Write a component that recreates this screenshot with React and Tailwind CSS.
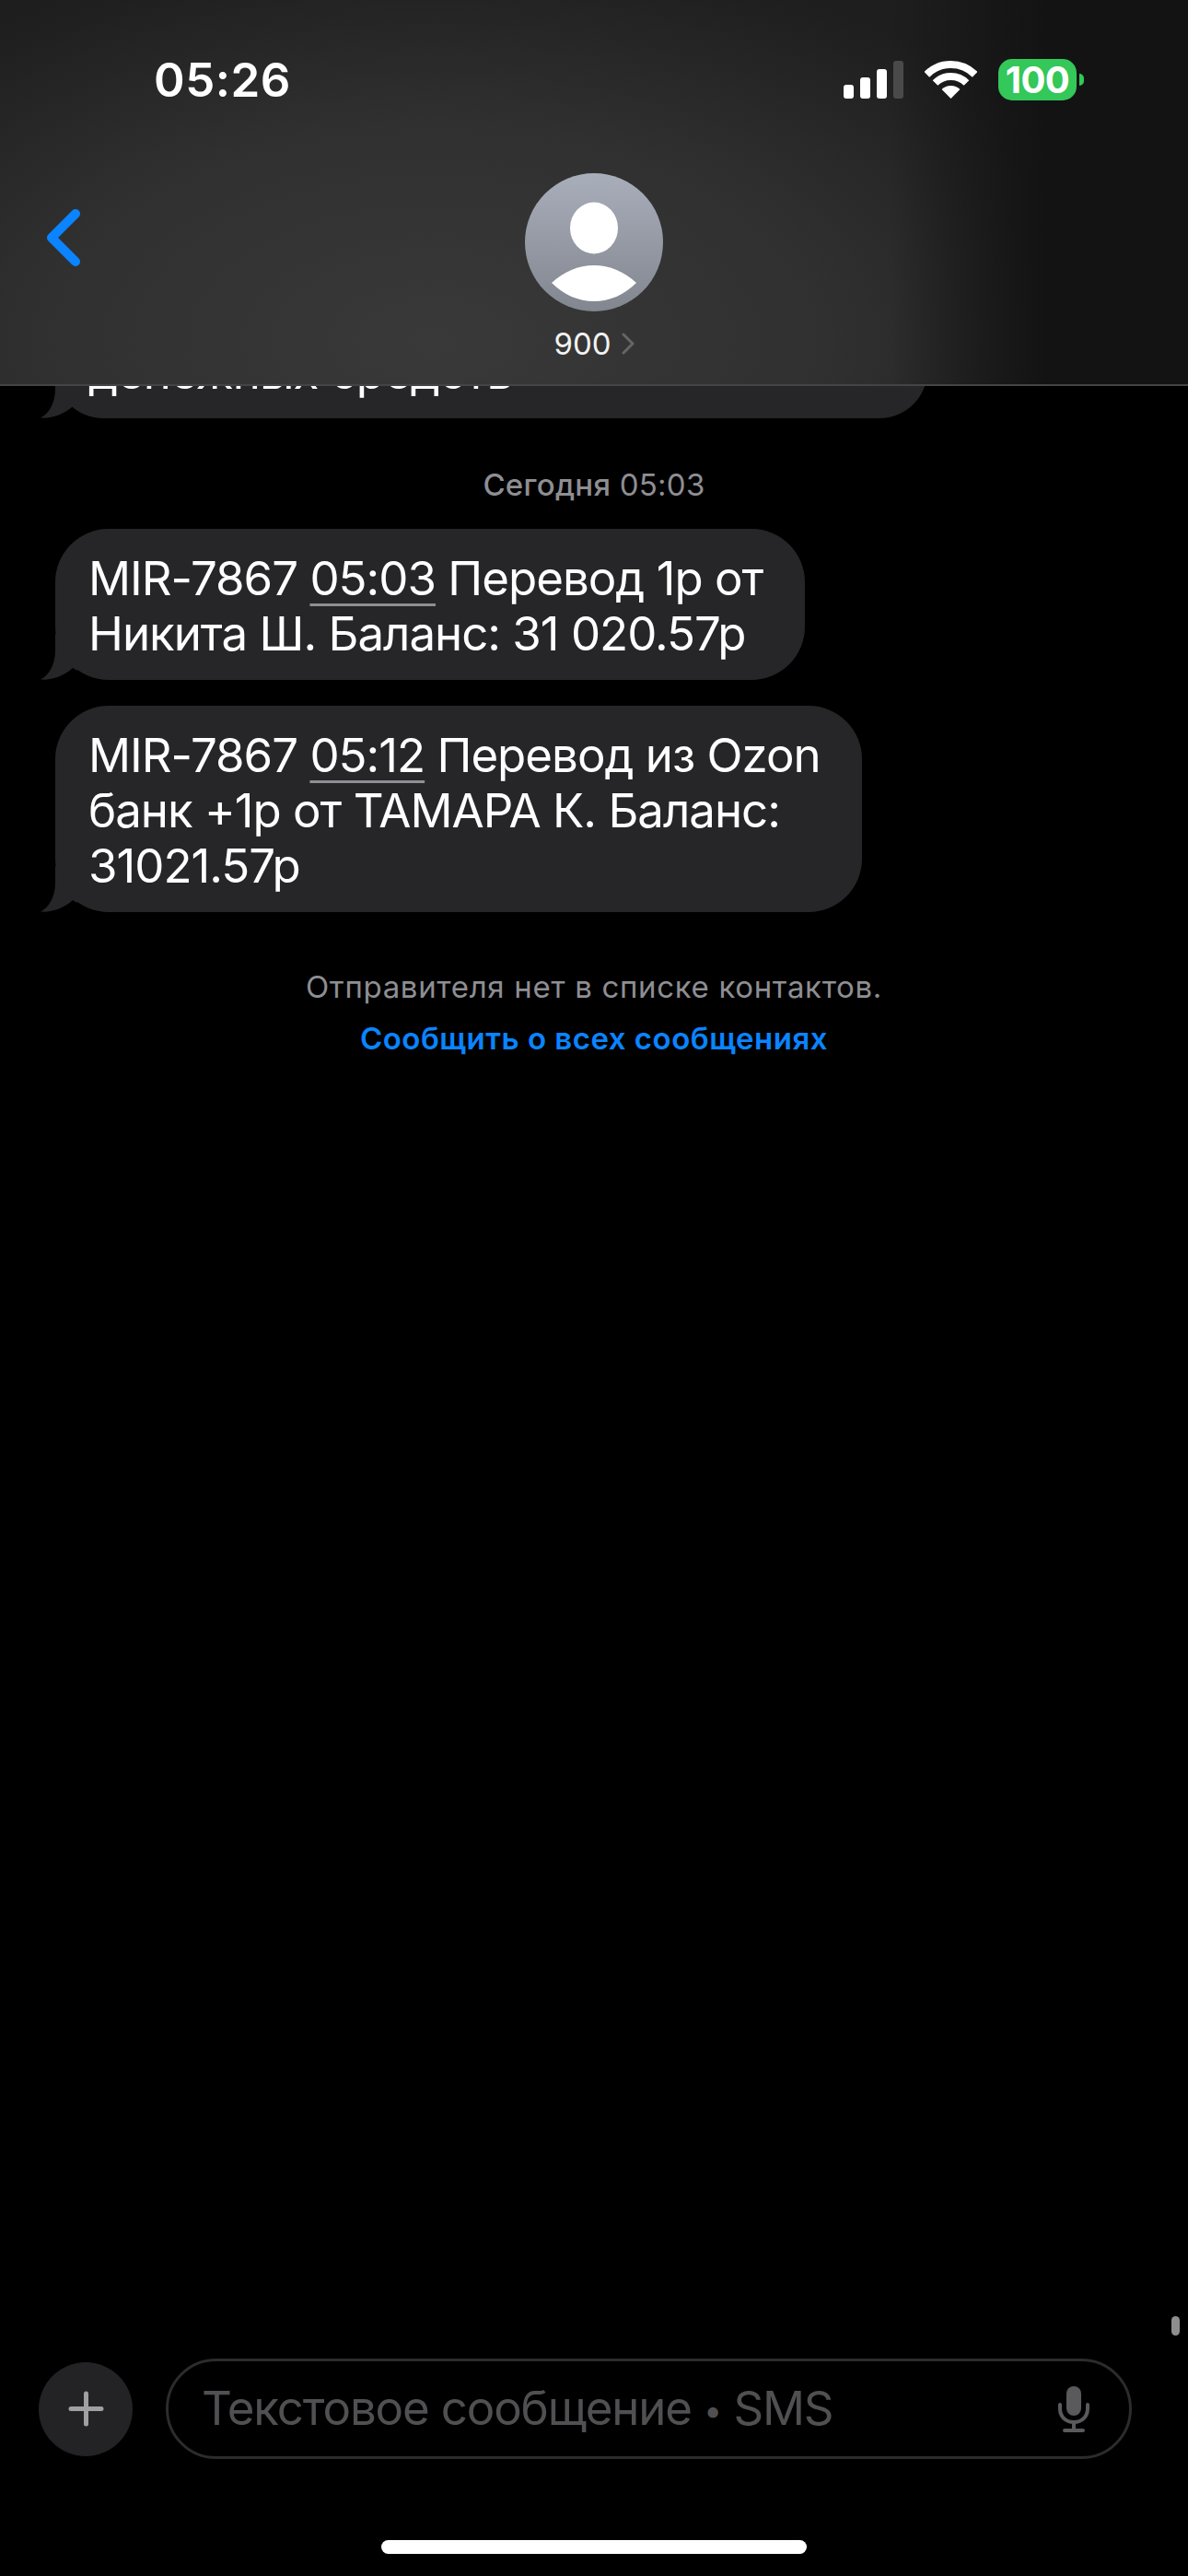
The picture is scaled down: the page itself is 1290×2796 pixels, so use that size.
const FONT = "font-['Inter','Noto_Sans',sans-serif]";

function Tail() {
  return (
    <svg className="absolute bottom-0 left-[-16px]" width="40" height="50" viewBox="0 0 40 50" fill="#262628">
      <path d="M16 0V18C16 34 9 45 0 49.5C12 50.5 25 46 35 37L40 40V0Z" />
    </svg>
  );
}

function Bubble({ className, children }) {
  return (
    <div className={`relative ml-[60px] rounded-[58px] bg-[#262628] pt-[24px] pb-[20px] pl-[36px] text-[51px] leading-[60px] font-[370] tracking-[-1px] whitespace-nowrap text-white ${className}`}>
      {children}
      <Tail />
    </div>
  );
}

function Time({ children }) {
  return <span className="underline decoration-[#8e8e93] decoration-[3px] underline-offset-[9px]">{children}</span>;
}

function StatusIcons() {
  return (
    <div className="flex items-center">
      <div className="flex h-[41px] items-end gap-[7px]">
        <div className="h-[15px] w-[11px] rounded-[3px] bg-white" />
        <div className="h-[23px] w-[11px] rounded-[3px] bg-white" />
        <div className="h-[32px] w-[11px] rounded-[3px] bg-white" />
        <div className="h-[41px] w-[11px] rounded-[3px] bg-[#4a4a4a]" />
      </div>
      <svg className="ml-[23px]" width="57" height="41" viewBox="0 0 57 41" fill="none" stroke="white" strokeWidth="8">
        <path d="M2.34 14.84A37 37 0 0 1 54.66 14.84" />
        <path d="M11.53 24.03A24 24 0 0 1 45.47 24.03" />
        <path d="M28.5 41L18.6 31.1A14 14 0 0 1 38.4 31.1Z" fill="white" stroke="none" />
      </svg>
      <div className="ml-[23px] flex h-[45px] w-[85px] items-center justify-center rounded-[15px] bg-[#34c759] text-[40px] leading-none font-bold tracking-[-0.5px] text-white">
        100
      </div>
      <div className="ml-[3px] h-[13px] w-[5px] rounded-r-full bg-[#34c759]" />
    </div>
  );
}

function Header() {
  return (
    <header className="h-[419px] shrink-0 border-b-2 border-[#444446] bg-[linear-gradient(90deg,transparent_75%,#131313_88%),radial-gradient(ellipse_780px_430px_at_470px_370px,#393939_0%,#303030_55%,#1e1e1e_100%)] pt-[64px]">
      <div className="flex h-[45px] items-center justify-between pr-[113px] pl-[167px]">
        <span className="text-[51px] leading-none font-semibold tracking-[0.5px] text-white">05:26</span>
        <StatusIcons />
      </div>
      <div className="mt-[79px] grid grid-cols-[1fr_auto_1fr]">
        <div className="pt-[38px] pl-[45px]">
          <svg width="48" height="75" viewBox="0 0 48 75" fill="none" stroke="#0a84ff" strokeWidth="10" strokeLinecap="round" strokeLinejoin="round">
            <path d="M37 6L11 32L37 58" />
          </svg>
        </div>
        <div className="flex flex-col items-center">
          <div className="h-[150px] w-[150px] overflow-hidden rounded-full bg-gradient-to-b from-[#a9aebb] to-[#81868f]">
            <svg width="150" height="150" viewBox="0 0 150 150" fill="white">
              <ellipse cx="75" cy="59.5" rx="26" ry="28" />
              <path d="M29 119C42 107 58 100 75 100C92 100 108 107 121 119C108 132 92 139 75 139C58 139 42 132 29 119Z" />
            </svg>
          </div>
          <div className="mt-[15px] flex h-[40px] items-center text-[33px] leading-[40px] text-[#f2f2f2]">
            <span>900</span>
            <svg className="ml-[11px]" width="14" height="26" viewBox="0 0 14 26" fill="none" stroke="#666668" strokeWidth="3" strokeLinecap="round" strokeLinejoin="round">
              <path d="M2 3L12 13L2 23" />
            </svg>
          </div>
        </div>
        <div />
      </div>
    </header>
  );
}

function Conversation() {
  return (
    <main className="relative min-h-0 flex-1 overflow-hidden">
      <Bubble className="mt-[-69px] w-[947px]">денежных средств</Bubble>
      <div className="mt-[52px] text-center text-[33px] leading-[40px] tracking-[0.25px] text-[#8e8e93]">
        <span className="font-medium">Сегодня</span> 05:03
      </div>
      <Bubble className="mt-[28px] w-[814px]">
        MIR-7867 <Time>05:03</Time> Перевод 1р от
        <br />
        Никита Ш. Баланс: 31 020.57р
      </Bubble>
      <Bubble className="mt-[28px] w-[876px]">
        MIR-7867 <Time>05:12</Time> Перевод из Ozon
        <br />
        банк +1р от ТАМАРА К. Баланс:
        <br />
        31021.57р
      </Bubble>
      <div className="mt-[61px] text-center text-[33px] leading-[40px] tracking-[0.66px] text-[#8e8e93]">Отправителя нет в списке контактов.</div>
      <div className="mt-[16px] text-center text-[33px] leading-[40px] font-semibold tracking-[0.5px] text-[#0a84ff]">Сообщить о всех сообщениях</div>
      <div className="absolute right-[9px] bottom-[25px] h-[21px] w-[9px] rounded-full bg-[#8e8e8e]" />
    </main>
  );
}

function Composer() {
  return (
    <div className="flex shrink-0 items-center gap-[36px] pl-[42px]">
      <div className="flex h-[102px] w-[102px] items-center justify-center rounded-full bg-[#232325]">
        <svg width="39" height="39" viewBox="0 0 39 39" stroke="#a0a0a2" strokeWidth="5" strokeLinecap="round">
          <path d="M19.5 3V36M3 19.5H36" />
        </svg>
      </div>
      <div className="flex h-[109px] w-[1049px] items-center justify-between rounded-[55px] border-[3px] border-[#2c2c2e] pr-[43px] pl-[36px]">
        <span className="text-[51px] font-[370] tracking-[-1.15px] text-[#505052]">
          Текстовое сообщение <span className="align-[3px] text-[36px]">•</span> SMS
        </span>
        <svg width="34" height="50" viewBox="0 0 34 50" fill="none" stroke="#5a5a5c" strokeWidth="4" strokeLinecap="round">
          <rect x="9" y="0" width="16" height="32" rx="8" fill="#5a5a5c" stroke="none" />
          <path d="M2 20V24C2 33 8 39 17 39C26 39 32 33 32 24V20" />
          <path d="M17 39V47M7 48H27" />
        </svg>
      </div>
    </div>
  );
}

export default function App() {
  return (
    <div className={`flex h-[2796px] w-[1290px] flex-col overflow-hidden bg-black ${FONT}`}>
      <Header />
      <Conversation />
      <Composer />
      <div className="mx-auto mt-[88px] mb-[24px] h-[15px] w-[462px] shrink-0 rounded-full bg-white" />
    </div>
  );
}
